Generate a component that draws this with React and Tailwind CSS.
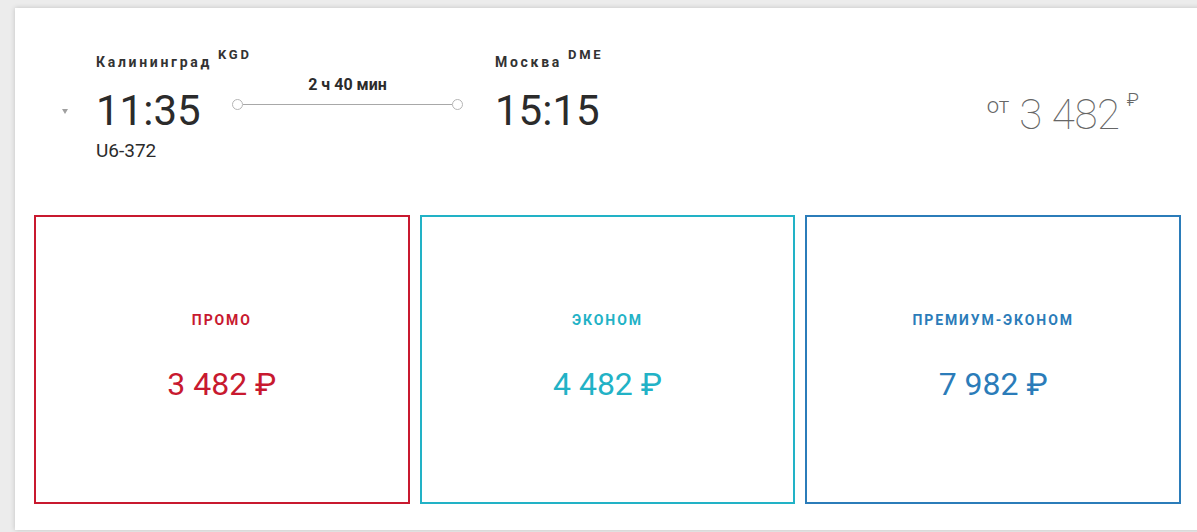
import React from "react";

const fares = [
  { name: "Промо", price: "3 482", border: "border-[#c8192f]", text: "text-[#c8192f]" },
  { name: "Эконом", price: "4 482", border: "border-[#22b2c6]", text: "text-[#22b2c6]" },
  { name: "Премиум-эконом", price: "7 982", border: "border-[#2b7cb9]", text: "text-[#2b7cb9]" },
];

const City = ({ name, code }) => (
  <div className="flex items-start h-[20px]">
    <span className="text-[14px] leading-[20px] font-bold tracking-[2.7px] text-[#333]">{name}</span>
    <span className="ml-[6px] -mt-[7px] text-[13px] leading-[20px] font-bold tracking-[2.8px] text-[#333]">
      {code}
    </span>
  </div>
);

const Dot = () => (
  <div className="w-[11px] h-[11px] rounded-full border border-[#b5b5b5] bg-white shrink-0" />
);

const App = () => {
  return (
    <div
      className="min-h-screen bg-[#ececec] pt-[8px] pl-[15px] overflow-hidden"
      style={{ fontFamily: "Roboto, 'Noto Sans', sans-serif" }}
    >
      <div className="w-[1210px] bg-white shadow-[0_0_5px_rgba(0,0,0,0.18)] pb-[26px]">
        {/* flight summary */}
        <div className="flex items-start h-[207px] pt-[44px]">
          <div className="w-[81px] pl-[47px] pt-[57px]">
            <div className="w-0 h-0 border-l-[3px] border-r-[3px] border-t-[5px] border-l-transparent border-r-transparent border-t-[#a0a0a0]" />
          </div>

          <div className="w-[136px] flex flex-col">
            <City name="Калининград" code="KGD" />
            <div className="mt-[18px] text-[42px] leading-[42px] text-[#2b2b2b]">11:35</div>
            <div className="mt-[7px] text-[19px] leading-[24px] text-[#2b2b2b]">U6-372</div>
          </div>

          <div className="w-[231px] flex flex-col items-center pt-[23px]">
            <div className="text-[16px] leading-[20px] font-bold text-[#2b2b2b]">2 ч 40 мин</div>
            <div className="w-full flex items-center mt-[4px]">
              <Dot />
              <div className="flex-1 h-px bg-[#a8a8a8]" />
              <Dot />
            </div>
          </div>

          <div className="ml-[32px] flex flex-col">
            <City name="Москва" code="DME" />
            <div className="mt-[18px] text-[42px] leading-[42px] text-[#2b2b2b]">15:15</div>
          </div>

          <div className="flex-1" />

          <div className="mr-[86px] mt-[42px] flex items-start text-[#666]">
            <span className="mt-[1px] text-[22px] leading-[22px] font-light">от</span>
            <span className="ml-[10px] text-[42px] leading-[42px] font-thin tracking-[-0.3px]">3 482</span>
            <span className="ml-[7px] -mt-[4px] text-[19px] leading-[19px] font-light">₽</span>
          </div>
        </div>

        {/* fare cards */}
        <div className="ml-[19px] w-[1147px] grid grid-cols-3 gap-[10px]">
          {fares.map((f) => (
            <div
              key={f.name}
              className={`h-[289px] border-2 ${f.border} ${f.text} flex flex-col items-center pt-[95px]`}
            >
              <div className="text-[14px] leading-[16px] font-bold uppercase tracking-[1.9px]">{f.name}</div>
              <div className="mt-[38px] text-[32px] leading-[36px]">{f.price} ₽</div>
            </div>
          ))}
        </div>
      </div>
    </div>
  );
};

export default App;
